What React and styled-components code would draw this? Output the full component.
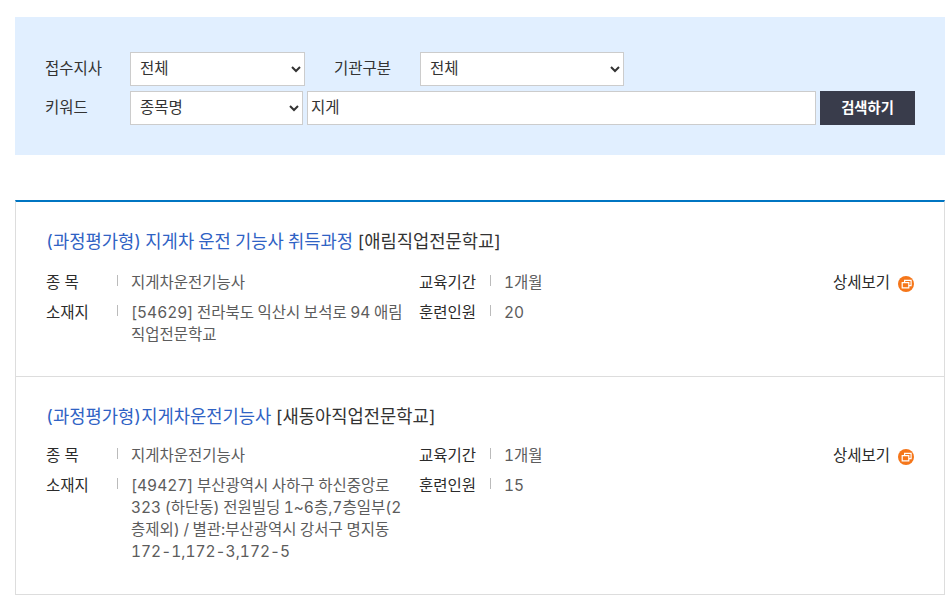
import React from "react";
import styled, { createGlobalStyle } from "styled-components";

const courses = [
  {
    title: "(과정평가형) 지게차 운전 기능사 취득과정",
    school: "[애림직업전문학교]",
    kind: "지게차운전기능사",
    period: "1개월",
    address: "[54629] 전라북도 익산시 보석로 94 애림 직업전문학교",
    count: "20",
  },
  {
    title: "(과정평가형)지게차운전기능사",
    school: "[새동아직업전문학교]",
    kind: "지게차운전기능사",
    period: "1개월",
    address: "[49427] 부산광역시 사하구 하신중앙로 323 (하단동) 전원빌딩 1~6층,7층일부(2층제외) / 별관:부산광역시 강서구 명지동 172-1,172-3,172-5",
    count: "15",
  },
];

const DetailIcon = () => (
  <svg width="16" height="16" viewBox="0 0 16 16">
    <circle cx="8" cy="8" r="8" fill="#f5761a" />
    <path d="M6.6 6V4.4h6.5v5.2h-2.2" fill="none" stroke="#fff" strokeWidth="1.2" />
    <path d="M4.2 6.6h6.6v5.2H4.2z" fill="none" stroke="#fff" strokeWidth="1.2" />
  </svg>
);

const App = () => {
  return (
    <Page>
      <GlobalStyle />
      <SearchPanel>
        <SearchRow>
          <SearchLabel>접수지사</SearchLabel>
          <Select $width={175} defaultValue="전체">
            <option>전체</option>
          </Select>
          <InlineLabel>기관구분</InlineLabel>
          <Select $width={204} defaultValue="전체">
            <option>전체</option>
          </Select>
        </SearchRow>
        <SearchRow>
          <SearchLabel>키워드</SearchLabel>
          <Select $width={173} defaultValue="종목명">
            <option>종목명</option>
          </Select>
          <KeywordInput defaultValue="지게" />
          <SearchButton>검색하기</SearchButton>
        </SearchRow>
      </SearchPanel>
      <CourseList>
        {courses.map((course) => (
          <CourseItem key={course.title}>
            <CourseTitle>
              <CourseLink>{course.title}</CourseLink> {course.school}
            </CourseTitle>
            <CourseBody>
              <InfoGrid>
                <InfoLabel>종 목</InfoLabel>
                <InfoValue>{course.kind}</InfoValue>
                <InfoLabel>교육기간</InfoLabel>
                <InfoValue>{course.period}</InfoValue>
                <InfoLabel>소재지</InfoLabel>
                <InfoValue>{course.address}</InfoValue>
                <InfoLabel>훈련인원</InfoLabel>
                <InfoValue>{course.count}</InfoValue>
              </InfoGrid>
              <DetailLink>
                상세보기 <DetailIcon />
              </DetailLink>
            </CourseBody>
          </CourseItem>
        ))}
      </CourseList>
    </Page>
  );
};

export default App;

const GlobalStyle = createGlobalStyle`
  html,
  body {
    margin: 0;
    background: #fff;
  }
  body {
    font-family: Inter, "Noto Sans CJK KR", sans-serif;
    font-size: 15.5px;
    font-variant-numeric: tabular-nums;
    color: #333;
  }
`;

const Page = styled.div`
  padding: 17px 2px 0 15px;
`;

const SearchPanel = styled.div`
  height: 138px;
  box-sizing: border-box;
  padding: 35px 30px 0;
  background: #e1efff;
  display: flex;
  flex-direction: column;
  gap: 5px;
`;

const SearchRow = styled.div`
  display: flex;
  align-items: center;
  height: 34px;
`;

const SearchLabel = styled.div`
  width: 85px;
  padding-bottom: 4px;
  color: #333;
`;

const InlineLabel = styled.div`
  width: 86px;
  margin-left: 29px;
  padding-bottom: 4px;
  color: #333;
`;

const Select = styled.select`
  width: ${(p) => p.$width}px;
  height: 34px;
  box-sizing: border-box;
  padding: 0 5px 1px;
  border: 1px solid #ccc;
  background: #fff;
  font: inherit;
  color: #333;
  border-radius: 0;
`;

const KeywordInput = styled.input`
  width: 509px;
  height: 34px;
  box-sizing: border-box;
  margin-left: 4px;
  padding: 0 3px 5px;
  border: 1px solid #ccc;
  background: #fff;
  font: inherit;
  color: #333;
`;

const SearchButton = styled.button`
  width: 95px;
  height: 34px;
  margin-left: 4px;
  padding: 0 0 4px;
  border: 0;
  background: #393c4b;
  color: #fff;
  font: inherit;
  font-size: 14.3px;
  font-weight: 700;
`;

const CourseList = styled.div`
  margin-top: 45px;
  border-top: 2px solid #0075c2;
  border-left: 1px solid #ddd;
  border-right: 1px solid #ddd;
  border-bottom: 1px solid #ddd;
`;

const CourseTitle = styled.div`
  margin-bottom: 15px;
  font-size: 17.7px;
  line-height: 30px;
  word-spacing: -0.6px;
  color: #333;
`;

const CourseItem = styled.div`
  padding: 25px 30px 30px;
  & + & {
    padding-bottom: 31px;
    border-top: 1px solid #ddd;
  }
  & + & ${CourseTitle} {
    margin-bottom: 13px;
  }
`;

const CourseLink = styled.span`
  color: #2f62c4;
`;

const CourseBody = styled.div`
  display: flex;
  justify-content: space-between;
  align-items: flex-start;
`;

const InfoGrid = styled.div`
  display: grid;
  grid-template-columns: 71px 302px 71px 100px;
  row-gap: 8px;
  line-height: 22px;
`;

const InfoLabel = styled.div`
  color: #2b2b2b;
`;

const InfoValue = styled.div`
  position: relative;
  padding: 0 12px 0 14px;
  word-spacing: -0.6px;
  color: #5c5c5c;
  &::before {
    content: "";
    position: absolute;
    left: 0;
    top: 3px;
    width: 1px;
    height: 11px;
    background: #bbb;
  }
`;

const DetailLink = styled.div`
  display: flex;
  align-items: center;
  gap: 8px;
  line-height: 22px;
  color: #2b2b2b;
  svg {
    margin-top: 2px;
  }
`;
